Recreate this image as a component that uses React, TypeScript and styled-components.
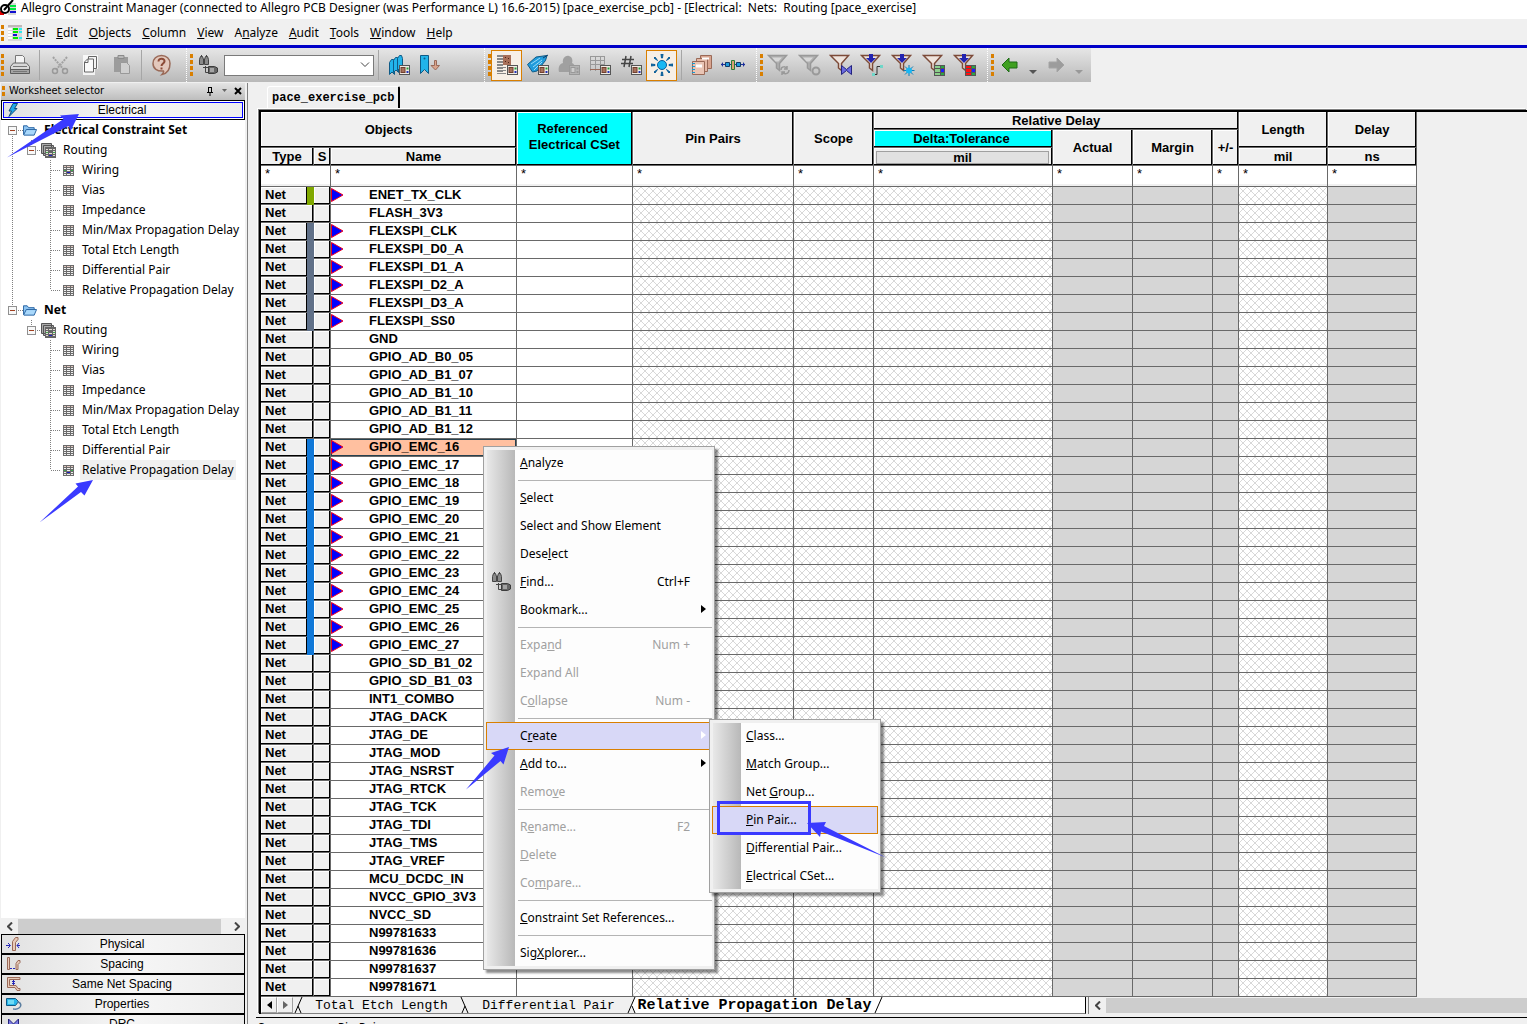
import React from "react";
import styled, { createGlobalStyle, css } from "styled-components";

const UI = `"Noto Sans", "Open Sans", sans-serif`;
const ARIAL = `"Liberation Sans", Arial, sans-serif`;
const MONO = `"Liberation Mono", "Courier New", monospace`;

const GlobalStyle = createGlobalStyle`
  *, *::before, *::after { box-sizing: border-box; }
  body { margin: 0; background: #f0f0f0; font-family: ${UI}; color: #000; }
  button, input, select { font: inherit; color: inherit; margin: 0; }
`;

const App_ = styled.div`
  position: relative;
  display: flex;
  flex-direction: column;
  height: 100vh;
  overflow: hidden;
  background: #f0f0f0;
`;

/* ---------- title and menu ---------- */

const TitleBar = styled.header`
  flex: none;
  display: flex;
  align-items: center;
  gap: 5px;
  height: 19px;
  padding-bottom: 3px;
  background: #fff;
  font: 12px/16px ${UI};
  white-space: pre;
`;

const MenuBar = styled.nav`
  flex: none;
  display: flex;
  align-items: center;
  height: 29px;
  border-bottom: 3px solid #0000c8;
  padding: 1px 0 0 1px;
  gap: 4px;
`;

const MenuList = styled.div`
  display: flex;
  gap: 11px;
`;

const MenuButton = styled.button`
  padding: 0;
  border: 0;
  background: none;
  font: 12px/18px ${UI};
`;

const Handle = styled.span<{ $dots?: number }>`
  flex: none;
  width: 3px;
  height: ${(p) => (p.$dots ?? 4) * 6 - 2}px;
  background: repeating-linear-gradient(#d97f00 0 4px, transparent 4px 6px);
`;

/* ---------- toolbar ---------- */

const Toolbar = styled.div`
  flex: none;
  display: flex;
  width: fit-content;
  height: 34px;
  margin-bottom: 1px;
  background: linear-gradient(#e6e6e6, #b9b9b9);
`;

const Group = styled.div<{ $w: number }>`
  display: flex;
  align-items: center;
  width: ${(p) => p.$w}px;
  padding-left: 3px;
  border-right: 1px dotted #fff;
  &:first-child { padding-left: 1px; }
  &:last-child { border-right: 0; }
`;

const ToolButton = styled.button<{ $on?: boolean; $w?: number }>`
  flex: none;
  display: flex;
  align-items: center;
  justify-content: center;
  width: ${(p) => p.$w ?? 31}px;
  height: 31px;
  padding: 0;
  border: 1px solid ${(p) => (p.$on ? "#d97f00" : "transparent")};
  background: ${(p) => (p.$on ? "#f7efe6" : "none")};
`;

const ToolDivider = styled.span`
  flex: none;
  width: 1px;
  height: 30px;
  margin: 0 4px;
  background: #a6a6a6;
`;

const SearchBox = styled.div`
  position: relative;
  width: 150px;
  height: 21px;
  svg { position: absolute; right: 4px; top: 6px; pointer-events: none; }
`;

const SearchSelect = styled.select`
  appearance: none;
  width: 100%;
  height: 100%;
  border: 1px solid #7a7a7a;
  border-radius: 0;
  background: #fff;
`;

/* ---------- body ---------- */

const Body = styled.div`
  flex: none;
  display: flex;
`;

const Sidebar = styled.aside`
  flex: none;
  display: flex;
  flex-direction: column;
  width: 248px;
  padding: 0 2px 0 1px;
  border-right: 1px solid #808080;
`;

const PanelHeader = styled.div`
  display: flex;
  align-items: center;
  height: 17px;
  padding: 0 3px 2px 1px;
  gap: 4px;
  background: linear-gradient(#e4e4e4, #bdbdbd);
  font: 11px/14px "DejaVu Sans Condensed", "DejaVu Sans", sans-serif;
`;

const PanelTools = styled.div`
  display: flex;
  align-items: center;
  gap: 6px;
  margin-left: auto;
`;

const PanelTool = styled.button`
  display: flex;
  padding: 0;
  border: 0;
  background: none;
`;

const SectionButton = styled.button<{ $active?: boolean }>`
  flex: none;
  display: grid;
  grid-template-columns: 20px 1fr 26px;
  align-items: center;
  width: 244px;
  height: 20px;
  padding: 0 0 0 4px;
  border: 1px solid #000;
  background: linear-gradient(90deg, #e2e2e2, #f6f6f6 55%, #ececec);
  font: 12px/16px ${ARIAL};
  ${(p) => p.$active && css`box-shadow: inset 0 0 0 1px #fff, inset 0 0 0 2px #0000ff;`}
`;

const Tree = styled.ul`
  flex: 1;
  margin: 0;
  padding: 0;
  list-style: none;
  background: #fff;
  overflow: hidden;
`;

const TreeRow = styled.li<{ $bold?: boolean; $selected?: boolean }>`
  display: flex;
  align-items: center;
  height: 20px;
  gap: 5px;
  font: ${(p) => (p.$bold ? 700 : 400)} 12px/20px ${UI};
  white-space: nowrap;
  span {
    padding: 0 2px;
    background: ${(p) => (p.$selected ? "#f0f0f0" : "none")};
  }
`;

const TreeLines = styled.svg`
  flex: none;
`;

const ScrollTrack = styled.div<{ $h: number }>`
  flex: none;
  display: flex;
  align-items: center;
  height: ${(p) => p.$h}px;
  background: #f0f0f0;
`;

const ScrollArrow = styled.button`
  flex: none;
  display: flex;
  align-items: center;
  justify-content: center;
  width: 17px;
  height: 100%;
  padding: 0;
  border: 0;
  background: none;
`;

const ScrollThumb = styled.span<{ $rest?: number }>`
  flex: 1;
  height: 15px;
  margin-right: ${(p) => p.$rest ?? 0}px;
  background: #cdcdcd;
`;

/* ---------- worksheet ---------- */

const Main = styled.main`
  flex: 1;
  min-width: 0;
  display: flex;
  flex-direction: column;
  padding-left: 11px;
`;

const DocTabs = styled.div`
  display: flex;
  height: 27px;
  padding: 3px 8px 2px;
`;

const DocTab = styled.button`
  padding: 0 4px;
  border: 0;
  border-top: 1px solid #fff;
  border-left: 1px solid #fff;
  border-right: 2px solid #000;
  border-radius: 3px 2px 0 0;
  background: #f0f0f0;
  font: 700 12px/20px ${MONO};
`;

const Frame = styled.div`
  border: solid #000;
  border-width: 2px 0 0 2px;
  box-shadow: -1px -1px 0 #808080, -2px -2px 0 #fff;
`;

const Sheet = styled.table`
  table-layout: fixed;
  width: 1156px;
  border-collapse: separate;
  border-spacing: 0;
  font: 700 13px/16px ${ARIAL};
`;

const Head = styled.th<{ $cyan?: boolean; $tall?: boolean }>`
  height: 18px;
  padding: ${(p) => (p.$tall ? "0 4px 4px 0" : p.$cyan ? "0 3px 0 0" : "0")};
  border: solid #696969;
  border-width: 0 1px 1px 0;
  background: ${(p) => (p.$cyan ? "#00ffff" : "#f0f0f0")};
  box-shadow: inset -1px -1px 0 #000, inset 1px 1px 0 #fff;
  font: 700 13px/16px ${ARIAL};
  white-space: pre;
`;

const UnitButton = styled.button`
  display: block;
  width: calc(100% - 5px);
  height: 13px;
  margin: 1px 0 0 2px;
  padding: 0;
  border: 1px solid #a0a0a0;
  background: #e1e1e1;
  font: 700 13px/11px ${ARIAL};
`;

const FilterCell = styled.td`
  height: 21px;
  padding: 0 0 2px;
  border: solid #696969;
  border-width: 0 1px 1px 0;
  background: linear-gradient(#fff 18px, #f0f0f0 18px);
`;

const FilterInput = styled.input`
  display: block;
  width: 100%;
  height: 18px;
  padding: 0 0 4px 4px;
  border: 0;
  background: none;
  font: 13px/14px ${ARIAL};
`;

type Kind = "white" | "hatch" | "grey";

const hatch = `url("data:image/svg+xml,%3Csvg xmlns='http://www.w3.org/2000/svg' width='8' height='8'%3E%3Cpath d='M-1-1L9 9M9-1L-1 9' stroke='%23d8d8d8'/%3E%3C/svg%3E")`;

const Cell = styled.td<{ $kind: Kind }>`
  height: 18px;
  padding: 0;
  border: solid #696969;
  border-width: 0 1px 1px 0;
  background: ${(p) => (p.$kind === "grey" ? "#d6d6d6" : p.$kind === "hatch" ? hatch + " #fff" : "#fff")};
`;

const NameCell = styled(Cell)<{ $selected?: boolean }>`
  ${(p) => p.$selected && css`background: #ffc0a0; box-shadow: inset 0 0 0 1px #26404d;`}
`;

const NameInner = styled.div`
  display: grid;
  grid-template-columns: 38px 1fr;
  align-items: center;
  height: 17px;
  padding-bottom: 1px;
  svg { display: block; }
`;

const TypeCell = styled.td<{ $bar?: string }>`
  height: 18px;
  padding: 0 0 1px 4px;
  border: solid #696969;
  border-width: 0 1px 1px 0;
  background: #f0f0f0;
  box-shadow: inset -1px -1px 0 #000, inset 1px 1px 0 #fff;
  ${(p) =>
    p.$bar &&
    css`
      border-image: linear-gradient(90deg, #696969 46px, ${p.$bar} 46px) 1;
      box-shadow: inset -6px 0 0 ${p.$bar}, inset -7px -1px 0 #000, inset 1px 1px 0 #fff;
    `}
`;

const SheetTabs = styled.div`
  display: flex;
  align-items: stretch;
  height: 17px;
`;

const SheetTabArea = styled.div`
  flex: none;
  display: flex;
  width: 825px;
  border-right: 1px solid #000;
  border-bottom: 1px solid #808080;
  background: #fff;
`;

const Nudge = styled.button`
  display: flex;
  align-items: center;
  justify-content: center;
  width: 16px;
  padding: 0;
  border: 1px solid #a0a0a0;
  border-left-color: #fff;
  border-top-color: #fff;
  background: #f0f0f0;
`;

const SheetTab = styled.button<{ $active?: boolean; $w: number }>`
  flex: none;
  width: ${(p) => p.$w}px;
  padding: 2px 0 0;
  border: 0;
  background: ${(p) => (p.$active ? "#fff" : "#f0f0f0")};
  font: ${(p) => (p.$active ? "700 15px" : "400 13px")} / 14px ${MONO};
  white-space: nowrap;
`;

const Slant = styled.svg`
  flex: none;
  display: block;
`;

const SheetScroll = styled.div`
  flex: 1;
  margin-left: 2px;
  border-left: 1px solid #808080;
`;

const StatusBar = styled.footer`
  display: flex;
  gap: 46px;
  height: 17px;
  margin: 3px 0 0 -3px;
  padding: 0 2px;
  border-top: 1px solid #000;
  font: 12px/20px ${UI};
`;

/* ---------- context menus ---------- */

const Popup = styled.div<{ $x: number; $y: number; $w: number }>`
  position: absolute;
  left: ${(p) => p.$x}px;
  top: ${(p) => p.$y}px;
  width: ${(p) => p.$w}px;
  padding: 2px;
  border: 1px solid #a0a0a0;
  box-shadow: 3px 3px 2px rgba(0, 0, 0, 0.45);
  background:
    linear-gradient(90deg, #e8e8e8, #b8b8b8) 3px 3px / 28px calc(100% - 6px) no-repeat,
    linear-gradient(#fdfdfd, #fdfdfd) 3px 3px / calc(100% - 5px) calc(100% - 6px) no-repeat,
    #f0f0f0;
`;

const PopupItem = styled.button<{ $hot?: boolean }>`
  display: grid;
  grid-template-columns: 33px 1fr auto 21px;
  align-items: center;
  width: 100%;
  height: 28px;
  padding: 0;
  border: 1px solid ${(p) => (p.$hot ? "#d97f00" : "transparent")};
  background: ${(p) => (p.$hot ? "#d8d8f7" : "none")};
  font: 12px/20px ${UI};
  text-align: left;
  white-space: nowrap;
  &:disabled { color: #a0a0a0; }
  svg { display: block; margin-left: 4px; }
  svg:last-child { margin-left: 11px; margin-bottom: 3px; }
`;

const PopupRule = styled.hr`
  height: 1px;
  margin: 3px 0 3px 32px;
  border: 0;
  background: #b4b4b4;
`;

const Overlay = styled.svg`
  position: absolute;
  left: 0;
  top: 0;
  pointer-events: none;
`;

/* ---------- icons ---------- */

const BR = "#9a6a58";

const Svg = ({ w = 22, h = 22, children }: { w?: number; h?: number; children: React.ReactNode }) => (
  <svg width={w} height={h} viewBox={`0 0 ${w} ${h}`} fill="none" aria-hidden="true">
    {children}
  </svg>
);

const Chip = ({ x = 11, y = 11, off = false }: { x?: number; y?: number; off?: boolean }) => (
  <g transform={`translate(${x} ${y})`}>
    <rect x="0.5" y="0.5" width="10" height="9" fill={off ? "#b4b4b4" : "#f2ebe4"} stroke={off ? "#999" : "#555"} />
    <rect x="2" y="2.5" width="4" height="5" fill={off ? "#ccc" : "#a8715c"} stroke={off ? "#999" : "#70402f"} />
    <rect x="7.5" y="2.5" width="2" height="2" fill={off ? "#999" : "#1f9c3a"} />
    <rect x="7.5" y="6" width="2" height="2" fill={off ? "#999" : "#2433b8"} />
  </g>
);

const Printer = () => (
  <Svg>
    <path d="M6.500 9.500V1.500h7l2 2v6" fill="#f4f4f4" stroke="#777" />
    <path d="M1.500 12.500l3-3.500h13l3 3.500v4h-19z" fill="#d8d8d8" stroke="#666" />
    <path d="M1.500 15.500h19v4h-19z" fill="#a4a4a4" stroke="#5c5c5c" />
    <path d="M4 12.500h14M4 17.500h14" stroke="#777" />
  </Svg>
);
const Scissors = () => (
  <Svg>
    <path d="M4 3l11 13M18 3L7 16" stroke="#a2a2a2" strokeWidth="2" strokeDasharray="2 1" />
    <circle cx="6" cy="17" r="2.5" stroke="#9a9a9a" strokeWidth="1.5" />
    <circle cx="16" cy="17" r="2.5" stroke="#9a9a9a" strokeWidth="1.5" />
  </Svg>
);
const CopyIcon = () => (
  <Svg>
    <path d="M3 1h15v14h-3v6H3z" fill="#fff" opacity=".8" />
    <path d="M8.500 2.500h8v12h-8z" fill="#f4f4f4" stroke="#666" />
    <path d="M4.500 8l3-3h6v13h-9z" fill="#fafafa" stroke="#666" />
    <path d="M8 5v3.500H4.500" stroke="#666" />
  </Svg>
);
const Paste = () => (
  <Svg>
    <path d="M3 3h14v15H3z" fill="#9c9c9c" />
    <path d="M7 1.500h6v3H7z" fill="#b8b8b8" stroke="#8a8a8a" />
    <path d="M9.500 8.500h6l3 3v8h-9z" fill="#cfcfcf" stroke="#999" />
  </Svg>
);
const HelpIcon = () => (
  <Svg>
    <path d="M10.500 1.500c5 0 8.500 3.500 8.500 8 0 6-3 10-8 11 1.500-1.500 2-2.500 1.500-3.500C6 17.500 2 14.500 2 9.500c0-4.500 3.500-8 8.500-8z" fill="#e3c8bc" stroke={BR} strokeWidth="1.500" />
    <path d="M7.500 7.500c0-4 6.500-3.500 6 0-.3 2-3 2-3 4.500" stroke="#8c4a36" strokeWidth="2" />
    <path d="M9.500 13.500h2v2h-2z" fill="#8c4a36" />
  </Svg>
);
const FindIcon = () => (
  <Svg>
    <path d="M1.500 10.500v-5l1-3h2l1 3v5zM6.500 10.500v-5l1-3h2l1 3v5z" fill="#8a8a8a" stroke="#444" />
    <path d="M3 1h1v2H3zM8 1h1v2H8zM5 5h2v3H5z" fill="#444" />
    <path d="M5 13.500h6M7.500 12v6.500H11" stroke="#444" />
    <path d="M10.500 12.500h6l3 1.500v4l-3 1.500h-6z" fill="#666" stroke="#3c3c3c" />
    <path d="M12 14h4v4h-4z" fill="#a4a4a4" />
  </Svg>
);
const Ribbon = ({ x, y }: { x: number; y: number }) => (
  <path transform={`translate(${x} ${y})`} d="M.5 3.500l2-3h2l1 3v12l-2.500-2.500-2.500 2.500z" fill="#22b4ea" stroke="#0f5a86" />
);
const Bookmarks = () => (
  <Svg>
    <Ribbon x={1} y={5} />
    <Ribbon x={5} y={3} />
    <Ribbon x={9} y={1} />
    <Chip />
  </Svg>
);
const BookmarkNext = () => (
  <Svg>
    <path d="M1.500 1.500h8v18l-4-4-4 4z" fill="#22b4ea" stroke="#0f5a86" />
    <circle cx="5.500" cy="4.500" r="1" fill="#0f5a86" />
    <path d="M15.500 6.500h2v5h3L16.500 16l-4.500-4.500h3.500z" fill="#d9a48c" stroke={BR} />
  </Svg>
);
const ListChip = () => (
  <Svg>
    <path d="M1 2h6M1 5h6M1 8h6M1 11h6M1 14h6M1 17h6" stroke="#888" strokeWidth="2" />
    <path d="M1 13h9v1H1zM1 16h9v1H1zM1 19h9v1H1z" fill="#888" />
    <path d="M7 1h8v10H7z" fill="#a86f58" />
    <path d="M9 3h1v1H9zM12 4h1v1h-1zM9 7h1v1H9zM12 8h1v1h-1z" fill="#4b261a" />
    <Chip />
  </Svg>
);
const TagChip = () => (
  <Svg>
    <path d="M.5 10.500L9 3l11-1.500-1.500 5L10 17l-4.500 1z" fill="#1f9bdc" stroke="#0f5a86" />
    <path d="M4 10l9-6M6 13l9-7M7 16l8-8" stroke="#9bdcf8" />
    <path d="M16 4l5-3" stroke="#0f3a66" />
    <Chip />
  </Svg>
);
const CloudChip = () => (
  <Svg>
    <path d="M5 9c-1-5 3-8 6-7s4 4 3 7c3 1 3 4 3 9H1c-1-4 0-8 4-9z" fill="#a0a0a0" />
    <Chip off />
  </Svg>
);
const GridChip = () => (
  <Svg>
    <path d="M1 2.500h15M1 6.500h15M1 10.500h15M1.500 2v15M6.500 2v15M11.500 2v9M15.500 2v9" stroke="#999" />
    <path d="M1 15.500h10" stroke={BR} />
    <Chip />
  </Svg>
);
const HashChip = () => (
  <Svg>
    <path d="M6 2L4 13M11 2L9 13M2 5.500h12M1 9.500h12" stroke="#444" strokeWidth="1.500" />
    <Chip />
  </Svg>
);
const Sun = () => (
  <Svg>
    <circle cx="11" cy="11" r="4.500" fill="#18b8f4" stroke="#0b5f9a" />
    <path d="M10 0h2l-.5 4h-1zM10.500 18h1l.5 4h-2zM0 10l4 .5v1L0 12zM18 10.500l4-.5v2l-4-.5zM3 4l1-1 2.500 3.500zM18 3l1 1-3.500 2.500zM3 18l3.500-2.500L4 19zM19 18l-1 1-2.500-3.500z" fill="#0b5f9a" stroke="#0b5f9a" />
  </Svg>
);
const Books = () => (
  <Svg>
    <path d="M9.500 1.500h11v13h-11z" fill="#d9a590" stroke={BR} />
    <path d="M5.500 4.500h11v13h-11z" fill="#e3b8a6" stroke={BR} />
    <path d="M11 3.500h7v2h-7z" fill="#fff" />
    <path d="M1.500 7.500h12v13h-12z" fill="#e9c5b5" stroke={BR} />
    <path d="M5 10.500h6v3H5z" fill="#fff" />
    <path d="M1 9.500h3M1 12.500h3M1 15.500h3M1 18.500h3" stroke="#1a9ad0" />
  </Svg>
);
const Satellite = () => (
  <Svg w={24}>
    <path d="M0 10.500h24" stroke="#1c2f9c" />
    <path d="M2 8l-2 2.500L2 13zM22 8l2 2.500L22 13z" fill="#1c2f9c" />
    <path d="M4.500 8.500h4v4h-4zM15.500 8.500h4v4h-4z" fill="#1f9bdc" stroke="#123a66" />
    <path d="M10.500 6.500h3v9h-3z" fill="#d9a073" stroke="#2c7a35" />
  </Svg>
);

const Funnel = ({ off, filled, children }: { off?: boolean; filled?: boolean; children?: React.ReactNode }) => (
  <Svg w={24} h={24}>
    <path d="M1.500 2.500h18l-7 8v7l-3-2.500v-4.500z" fill={off ? "#b0b0b0" : "#efe4dd"} stroke={off ? "#999" : "#7c4a38"} strokeWidth="1.500" />
    <path d="M5 4.500h10l-3.500 4h-3z" fill={off ? "#d8d8d8" : "none"} />
    {filled && <path d="M6 5h10l-5 5z" fill="#2323b0" />}
    {filled && <path d="M9 1h4v4H9z" fill="#2323b0" />}
    {children}
  </Svg>
);

const GreyCycle = () => (
  <Funnel off><path d="M14 17c0-4 5-4 6-1M22 17c0 4-5 5-7 2M20 13v3h-3M15 22v-3h3" stroke="#999" strokeWidth="1.500" /></Funnel>
);
const GreyStop = () => (
  <Funnel off><circle cx="18" cy="18" r="3.500" stroke="#999" strokeWidth="2" /></Funnel>
);
const FunnelBow = () => (
  <Funnel><path d="M12.500 12.500l5 4 5-4v9l-5-4-5 4z" fill="#6a6ae0" stroke="#23237f" /></Funnel>
);
const FunnelNote = () => (
  <Funnel filled><path d="M14 21.500h3v-8h4" stroke="#333" /><path d="M20 12h3v3h-3zM12 20h3v3h-3z" fill="#6fd6c8" /></Funnel>
);
const FunnelSun = () => (
  <Funnel filled>
    <path d="M18 12v11M12.500 17.500h11M14 13.500l8 8M22 13.500l-8 8" stroke="#0b7fb8" />
    <circle cx="18" cy="17.500" r="3" fill="#18b8f4" />
  </Funnel>
);
const Rack = ({ left }: { left: string }) => (
  <>
    <path d="M12 12h11v11H12z" fill="#555" />
    <path d="M13 13h5v2h-5zM13 16h5v3h-5zM13 20h5v2h-5z" fill={left} />
    <path d="M19 13h3v2h-3zM19 20h3v2h-3z" fill="#2ca644" />
    <path d="M19 16h3v3h-3z" fill="#1d1dff" />
  </>
);
const FunnelGreen = () => <Funnel><Rack left="#8ccf8c" /></Funnel>;
const FunnelRed = () => <Funnel filled><Rack left="#ff1010" /></Funnel>;

const Arrow = ({ left = false, fill, line }: { left?: boolean; fill: string; line: string }) => (
  <Svg w={18} h={18}>
    <path d={left ? "M1 9l7-7v4h8v6H8v4z" : "M17 9l-7-7v4H2v6h8v4z"} fill={fill} stroke={line} />
  </Svg>
);
const Caret = ({ c }: { c: string }) => (
  <svg width="8" height="20" aria-hidden="true"><path d="M0 15h8l-4 4z" fill={c} /></svg>
);
const Chevron = ({ right = false }: { right?: boolean }) => (
  <svg width="6" height="9" aria-hidden="true">
    <path d={right ? "M1 0.500l4 4-4 4" : "M5 0.500l-4 4 4 4"} fill="none" stroke="#444" strokeWidth="2" />
  </svg>
);

const Bolt = () => (
  <svg width="14" height="16" aria-hidden="true">
    <path d="M7 1.500h4.500L8.500 6.500H11L3 14.500 5.500 9H3z" fill="#22a8e8" stroke="#134b78" />
  </svg>
);
const PhysicalIcon = () => (
  <svg width="15" height="16" aria-hidden="true" fill="none">
    <path d="M12 1.500H9.500l-3 4v9h3v-8l2.500-3z" fill="#e8cbb9" stroke={BR} />
    <path d="M0 9.500h4M14 9.500h-3M2 7l2.500 2.500L2 12M13 7l-2 2.500 2 2.500" stroke="#2828b8" />
  </svg>
);
const SpacingIcon = () => (
  <svg width="15" height="16" aria-hidden="true" fill="none">
    <path d="M1.500 1.500h2v12h-2zM14 4.500h-2l-2 3v6h2v-5l2-2z" fill="#e8cbb9" stroke={BR} />
    <path d="M4 12.500h6" stroke="#2828b8" strokeDasharray="2 1" />
  </svg>
);
const SameNetIcon = () => (
  <svg width="15" height="16" aria-hidden="true" fill="none">
    <path d="M14 1.500H1.500v10H9l2 3h3v-2h-2l-2-3H3.500v-6H14z" fill="#e8cbb9" stroke={BR} />
    <path d="M7.500 4v5M6 5.500h3M6 7.500h3" stroke="#2828b8" />
  </svg>
);
const PropsIcon = () => (
  <svg width="16" height="16" aria-hidden="true" fill="none">
    <path d="M.5 2.500h9l3 3-3 4h-9z" fill="#27b6ea" stroke="#0f5a86" />
    <path d="M2 5h6M2 7h6" stroke="#bff" />
    <path d="M11 6c4 0 5 4 2 6s-4 1-6 1" stroke="#5b7ea0" strokeWidth="1.500" />
  </svg>
);
const DrcIcon = () => (
  <svg width="15" height="16" aria-hidden="true">
    <path d="M2.500 3v11l5-5 5 5V3l-5 5z" fill="#7a7ae0" stroke="#23237f" />
  </svg>
);

const FolderIcon = () => (
  <svg width="14" height="12" viewBox="0 0 15 12" aria-hidden="true">
    <path d="M.5 11V1.500h4l1.500 2h6V6" fill="#8dc4f2" stroke="#245f9e" />
    <path d="M.8 11L3.500 5.500h11L12 11.500H1z" fill="#a9d8fb" stroke="#245f9e" />
  </svg>
);
const StackIcon = () => (
  <svg width="15" height="15" aria-hidden="true">
    <path d="M.5.500h10v10H.5zM2.500 2.500h10v10h-10z" fill="#aaa" stroke="#555" />
    <path d="M4 4h11v11H4z" fill="#666" />
    <path d="M5 6h2v1H5zM8 6h3v1H8zM12 6h2v1h-2zM5 8h2v1H5zM12 8h2v1h-2zM5 10h2v1H5zM8 10h3v1H8zM12 10h2v1h-2zM5 12h2v1H5zM12 12h2v1h-2z" fill="#e4dcd6" />
    <path d="M5 9h2v1H5zM12 9h2v1h-2z" fill="#3fae4f" />
    <path d="M8 12h3v1H8z" fill="#2222c0" />
  </svg>
);
const SheetIcon = ({ marked }: { marked?: boolean }) => (
  <svg width="12" height="11" aria-hidden="true">
    <path d="M0 0h11v11H0z" fill="#6c6c6c" />
    <path d="M1 1h2v1H1zM4 1h3v1H4zM8 1h2v1H8z" fill="#e3c8c0" />
    <path d="M1 3h2v1H1zM4 3h3v1H4zM8 3h2v1H8zM1 5h2v1H1zM4 5h3v1H4zM8 5h2v1H8zM1 7h2v1H1zM4 7h3v1H4zM8 7h2v1H8zM1 9h2v1H1zM4 9h3v1H4zM8 9h2v1H8z" fill="#f0f0f0" />
    {marked && <path d="M1 5h2v1H1zM8 5h2v1H8z" fill="#3fae4f" />}
    {marked && <path d="M4 7h3v1H4z" fill="#2222c0" />}
  </svg>
);
const FlagIcon = () => (
  <svg width="13" height="14" aria-hidden="true">
    <path d="M.5.500L12 7 .5 13.500z" fill="#0000ff" stroke="#f00020" />
  </svg>
);
const SubArrow = ({ c }: { c: string }) => (
  <svg width="5" height="8" aria-hidden="true"><path d="M0 0l5 4-5 4z" fill={c} /></svg>
);
const GridLogo = () => (
  <svg width="14" height="16" aria-hidden="true">
    <path d="M0 0h14v16H0z" fill="#d8d8d8" />
    <path d="M0 0h14v2H0z" fill="#c0b8b8" />
    <path d="M0 3h4v2H0zM0 6h4v2H0zM0 9h4v2H0zM0 12h4v2H0z" fill="#fff" />
    <path d="M5 3h5v2H5zM5 6h5v2H5zM5 12h5v2H5z" fill="#00e800" />
    <path d="M5 9h4v2H5z" fill="#1010d0" />
    <path d="M11 3h3v2h-3zM11 6h3v2h-3zM11 12h3v2h-3z" fill="#30e8f0" />
  </svg>
);
const TitleLogo = () => (
  <svg width="16" height="16" aria-hidden="true">
    <path d="M8 3h8v12H8z" fill="#d8d8d8" />
    <path d="M10 5h6v2h-6zM10 8h6v2h-6z" fill="#00e840" />
    <path d="M10 11h6v2h-6z" fill="#1010d0" />
    <path d="M0 11h4v4H0z" fill="#e00000" />
    <circle cx="5" cy="9" r="4" fill="#fff" stroke="#000" strokeWidth="2" />
    <path d="M4 10L13 0" stroke="#000" strokeWidth="2" />
  </svg>
);

/* ---------- data ---------- */

/* "_" marks the access key that follows it */
const Label = ({ t }: { t: string }) => {
  const i = t.indexOf("_");
  if (i < 0) return <span>{t}</span>;
  return (
    <span>
      {t.slice(0, i)}
      <u>{t[i + 1]}</u>
      {t.slice(i + 2)}
    </span>
  );
};

const menus = ["_File", "_Edit", "_Objects", "_Column", "_View", "A_nalyze", "_Audit", "_Tools", "_Window", "_Help"];

const GREEN = "#80a800";
const SLATE = "#607088";
const BLUE = "#1078d8";

const nets: [string, string?][] = [
  ["ENET_TX_CLK", GREEN], ["FLASH_3V3"], ["FLEXSPI_CLK", SLATE], ["FLEXSPI_D0_A", SLATE],
  ["FLEXSPI_D1_A", SLATE], ["FLEXSPI_D2_A", SLATE], ["FLEXSPI_D3_A", SLATE], ["FLEXSPI_SS0", SLATE],
  ["GND"], ["GPIO_AD_B0_05"], ["GPIO_AD_B1_07"], ["GPIO_AD_B1_10"], ["GPIO_AD_B1_11"], ["GPIO_AD_B1_12"],
  ["GPIO_EMC_16", BLUE], ["GPIO_EMC_17", BLUE], ["GPIO_EMC_18", BLUE], ["GPIO_EMC_19", BLUE],
  ["GPIO_EMC_20", BLUE], ["GPIO_EMC_21", BLUE], ["GPIO_EMC_22", BLUE], ["GPIO_EMC_23", BLUE],
  ["GPIO_EMC_24", BLUE], ["GPIO_EMC_25", BLUE], ["GPIO_EMC_26", BLUE], ["GPIO_EMC_27", BLUE],
  ["GPIO_SD_B1_02"], ["GPIO_SD_B1_03"], ["INT1_COMBO"], ["JTAG_DACK"], ["JTAG_DE"], ["JTAG_MOD"],
  ["JTAG_NSRST"], ["JTAG_RTCK"], ["JTAG_TCK"], ["JTAG_TDI"], ["JTAG_TMS"], ["JTAG_VREF"],
  ["MCU_DCDC_IN"], ["NVCC_GPIO_3V3"], ["NVCC_SD"], ["N99781633"], ["N99781636"], ["N99781637"], ["N99781671"],
];

const colWidths = [53, 17, 186, 116, 161, 80, 179, 80, 80, 26, 89, 89];
const dataKinds: Kind[] = ["white", "hatch", "hatch", "hatch", "grey", "grey", "grey", "hatch", "grey"];
const filterNames = ["Name", "Referenced CSet", "Pin Pairs", "Scope", "Delta", "Actual", "Margin", "Sign", "Length", "Delay"];

const sheets = ["Wiring", "Vias", "Impedance", "Min/Max Propagation Delay", "Total Etch Length", "Differential Pair", "Relative Propagation Delay"];

type Entry = { t: string; key?: string; off?: boolean; sub?: boolean; hot?: boolean; icon?: boolean } | null;

const mainMenu: Entry[] = [
  { t: "_Analyze" }, null,
  { t: "_Select" }, { t: "Select and Show Element" }, { t: "Dese_lect" },
  { t: "_Find...", key: "Ctrl+F", icon: true }, { t: "Bookmark...", sub: true }, null,
  { t: "Expa_nd", key: "Num +", off: true }, { t: "Expand All", off: true }, { t: "C_ollapse", key: "Num -", off: true }, null,
  { t: "C_reate", sub: true, hot: true }, { t: "_Add to...", sub: true }, { t: "Remo_ve", off: true }, null,
  { t: "R_ename...", key: "F2", off: true }, { t: "_Delete", off: true }, { t: "Co_mpare...", off: true }, null,
  { t: "_Constraint Set References..." }, null,
  { t: "Sig_Xplorer..." },
];

const createMenu: Entry[] = [
  { t: "_Class..." }, { t: "_Match Group..." }, { t: "Net _Group..." },
  { t: "_Pin Pair...", hot: true }, { t: "_Differential Pair..." }, { t: "_Electrical CSet..." },
];

/* ---------- parts ---------- */

const Lines = ({ w, d, box }: { w: number; d: string; box?: number }) => (
  <TreeLines width={w} height="20" overflow="visible" aria-hidden="true">
    <path d={d} stroke="#808080" strokeDasharray="1 1" fill="none" />
    {box !== undefined && (
      <>
        <rect x={box + 0.5} y="6.500" width="8" height="8" fill="#f8f8f8" stroke="#909090" />
        <path d={`M${box + 2} 10.500h5`} stroke="#a04020" />
      </>
    )}
  </TreeLines>
);

const Branch = ({ title, last, marked }: { title: string; last?: boolean; marked: number }) => {
  const trunk = last ? "" : "M11.500 0v20";
  return (
    <>
      <TreeRow $bold>
        <Lines w={17} box={7} d={(last ? "M11.500 0v6" : "M11.500 16v4") + "M17 10.500h5"} />
        <FolderIcon />
        <span>{title}</span>
      </TreeRow>
      <TreeRow>
        <Lines w={35} box={26} d={trunk + "M30.500 0v6M36 10.500h4"} />
        <StackIcon />
        <span>Routing</span>
      </TreeRow>
      {sheets.map((s, i) => (
        <TreeRow key={s} $selected={last && i === sheets.length - 1}>
          <Lines w={57} d={trunk + (i === sheets.length - 1 ? "M49.500 0v10" : "M49.500 0v20") + "M50 10.500h10"} />
          <SheetIcon marked={i === marked} />
          <span>{s}</span>
        </TreeRow>
      ))}
    </>
  );
};

const Menu = ({ items }: { items: Entry[] }) => (
  <>
    {items.map((m, i) =>
      m === null ? (
        <PopupRule key={i} />
      ) : (
        <PopupItem key={i} $hot={m.hot} disabled={m.off}>
          {m.icon ? <FindIcon /> : <i />}
          <Label t={m.t} />
          <span>{m.key}</span>
          {m.sub ? <SubArrow c={m.hot ? "#fff" : "#000"} /> : <i />}
        </PopupItem>
      )
    )}
  </>
);

const Tool = ({ name, icon, on, w }: { name: string; icon: React.ReactNode; on?: boolean; w?: number }) => (
  <ToolButton aria-label={name} $on={on} $w={w}>{icon}</ToolButton>
);

export default function App() {
  return (
    <App_>
      <GlobalStyle />
      <TitleBar>
        <TitleLogo />
        <span>{"Allegro Constraint Manager (connected to Allegro PCB Designer (was Performance L) 16.6-2015) [pace_exercise_pcb] - [Electrical:  Nets:  Routing [pace_exercise]"}</span>
      </TitleBar>
      <MenuBar>
        <Handle $dots={3} />
        <GridLogo />
        <MenuList>
          {menus.map((m) => <MenuButton key={m}><Label t={m} /></MenuButton>)}
        </MenuList>
      </MenuBar>

      <Toolbar>
        <Group $w={187}>
          <Handle />
          <Tool name="Print" icon={<Printer />} />
          <ToolDivider />
          <Tool name="Cut" icon={<Scissors />} />
          <Tool name="Copy" icon={<CopyIcon />} />
          <Tool name="Paste" icon={<Paste />} />
          <ToolDivider />
          <Tool name="Help" icon={<HelpIcon />} />
        </Group>
        <Group $w={298}>
          <Handle />
          <Tool name="Find" icon={<FindIcon />} />
          <SearchBox>
            <SearchSelect aria-label="Find text"><option></option></SearchSelect>
            <svg width="10" height="8" aria-hidden="true"><path d="M1 1.500l4 4 4-4" fill="none" stroke="#444" /></svg>
          </SearchBox>
          <ToolDivider />
          <Tool name="Bookmarks" icon={<Bookmarks />} />
          <Tool name="Next bookmark" icon={<BookmarkNext />} />
        </Group>
        <Group $w={272}>
          <Handle />
          <Tool name="Select list" icon={<ListChip />} on />
          <Tool name="Tag" icon={<TagChip />} />
          <Tool name="Cloud" icon={<CloudChip />} />
          <Tool name="Grid" icon={<GridChip />} />
          <Tool name="Number" icon={<HashChip />} />
          <Tool name="Highlight" icon={<Sun />} on />
          <ToolDivider />
          <Tool name="Reports" icon={<Books />} />
          <Tool name="Topology" icon={<Satellite />} />
        </Group>
        <Group $w={231}>
          <Handle />
          <Tool name="Refresh filter" icon={<GreyCycle />} />
          <Tool name="Stop filter" icon={<GreyStop />} />
          <Tool name="Filter DRC" icon={<FunnelBow />} />
          <Tool name="Filter signal" icon={<FunnelNote />} />
          <Tool name="Filter highlight" icon={<FunnelSun />} />
          <Tool name="Filter rows" icon={<FunnelGreen />} />
          <Tool name="Filter failures" icon={<FunnelRed />} />
        </Group>
        <Group $w={103}>
          <Handle />
          <Tool name="Back" icon={<Arrow left fill="#3fa020" line="#1d6a14" />} />
          <Tool name="Back history" icon={<Caret c="#555" />} w={15} />
          <Tool name="Forward" icon={<Arrow fill="#9c9c9c" line="#a4a4a4" />} />
          <Tool name="Forward history" icon={<Caret c="#999" />} w={15} />
        </Group>
      </Toolbar>

      <Body>
        <Sidebar>
          <PanelHeader>
            <Handle $dots={2} />
            <span>Worksheet selector</span>
            <PanelTools>
              <PanelTool aria-label="Pin"><svg width="8" height="10"><path d="M2 1.500h4M2.500 1v5M5.500 1v5M1 6.500h6M4 6v4" stroke="#000" /></svg></PanelTool>
              <PanelTool aria-label="Options"><svg width="8" height="8"><path d="M2 2h5L4.500 5z" fill="#666" /></svg></PanelTool>
              <PanelTool aria-label="Close"><svg width="8" height="8"><path d="M1 1l6 6M7 1L1 7" stroke="#000" strokeWidth="2" /></svg></PanelTool>
            </PanelTools>
          </PanelHeader>
          <SectionButton $active><Bolt /><span>Electrical</span></SectionButton>
          <Tree>
            <Branch title="Electrical Constraint Set" marked={0} />
            <Branch title="Net" marked={6} last />
          </Tree>
          <ScrollTrack $h={16}>
            <ScrollArrow aria-label="Scroll left"><Chevron /></ScrollArrow>
            <ScrollThumb $rest={7} />
            <ScrollArrow aria-label="Scroll right"><Chevron right /></ScrollArrow>
          </ScrollTrack>
          <SectionButton><PhysicalIcon /><span>Physical</span></SectionButton>
          <SectionButton><SpacingIcon /><span>Spacing</span></SectionButton>
          <SectionButton><SameNetIcon /><span>Same Net Spacing</span></SectionButton>
          <SectionButton><PropsIcon /><span>Properties</span></SectionButton>
          <SectionButton><DrcIcon /><span>DRC</span></SectionButton>
        </Sidebar>

        <Main>
          <DocTabs><DocTab>pace_exercise_pcb</DocTab></DocTabs>
          <Frame>
            <Sheet>
              <colgroup>{colWidths.map((w, i) => <col key={i} width={w} />)}</colgroup>
              <thead>
                <tr>
                  <Head colSpan={3} rowSpan={2}>Objects</Head>
                  <Head rowSpan={3} $cyan $tall>{"Referenced\n Electrical CSet"}</Head>
                  <Head rowSpan={3}>Pin Pairs</Head>
                  <Head rowSpan={3}>Scope</Head>
                  <Head colSpan={4}>Relative Delay</Head>
                  <Head rowSpan={2}>Length</Head>
                  <Head rowSpan={2}>Delay</Head>
                </tr>
                <tr>
                  <Head $cyan>Delta:Tolerance</Head>
                  <Head rowSpan={2}>Actual</Head>
                  <Head rowSpan={2}>Margin</Head>
                  <Head rowSpan={2}>+/-</Head>
                </tr>
                <tr>
                  <Head>Type</Head>
                  <Head>S</Head>
                  <Head>Name</Head>
                  <Head><UnitButton>mil</UnitButton></Head>
                  <Head>mil</Head>
                  <Head>ns</Head>
                </tr>
              </thead>
              <tbody>
                <tr>
                  <FilterCell colSpan={2}><FilterInput aria-label="Filter Type" defaultValue="*" /></FilterCell>
                  {filterNames.map((n) => (
                    <FilterCell key={n}><FilterInput aria-label={`Filter ${n}`} defaultValue="*" /></FilterCell>
                  ))}
                </tr>
                {nets.map(([name, bar]) => (
                  <tr key={name}>
                    <TypeCell $bar={bar}>Net</TypeCell>
                    <TypeCell />
                    <NameCell $kind="white" $selected={name === "GPIO_EMC_16"}>
                      <NameInner>{bar ? <FlagIcon /> : <i />}<span>{name}</span></NameInner>
                    </NameCell>
                    {dataKinds.map((k, i) => <Cell key={i} $kind={k} />)}
                  </tr>
                ))}
              </tbody>
            </Sheet>
            <SheetTabs>
              <SheetTabArea>
                <Nudge aria-label="Previous sheet"><svg width="5" height="8"><path d="M5 0L0 4l5 4z" /></svg></Nudge>
                <Nudge aria-label="Next sheet"><svg width="5" height="8"><path d="M0 0l5 4-5 4z" fill="#666" /></svg></Nudge>
                <Slant width="10" height="16"><path d="M0 0h10v16H0z" fill="#f0f0f0" /><path d="M2 16L9 0M5 9l3 7" stroke="#000" fill="none" /></Slant>
                <SheetTab $w={157}>Total Etch Length</SheetTab>
                <Slant width="10" height="16"><path d="M0 0h10v16H0z" fill="#f0f0f0" /><path d="M1 0l7 16M2 16l3-7" stroke="#000" fill="none" /></Slant>
                <SheetTab $w={157}>Differential Pair</SheetTab>
                <Slant width="9" height="16"><path d="M0 0h8L5 9l3 7H0z" fill="#f0f0f0" /><path d="M1 16L8 0M5 9l3 7" stroke="#000" fill="none" /></Slant>
                <SheetTab $active $w={237}>Relative Propagation Delay</SheetTab>
                <Slant width="10" height="16"><path d="M2 16L9 0" stroke="#000" fill="none" /></Slant>
              </SheetTabArea>
              <SheetScroll>
                <ScrollTrack $h={17}>
                  <ScrollArrow aria-label="Scroll sheet left"><Chevron /></ScrollArrow>
                  <ScrollThumb />
                </ScrollTrack>
              </SheetScroll>
            </SheetTabs>
          </Frame>
          <StatusBar><span>Scope</span><span>Pin Pair</span></StatusBar>
        </Main>
      </Body>

      <Popup $x={483} $y={446} $w={232}><Menu items={mainMenu} /></Popup>
      <Popup $x={709} $y={719} $w={172}><Menu items={createMenu} /></Popup>

      <Overlay width="900" height="880" aria-hidden="true">
        <g fill="#3a3aff">
          <path d="M79 114L60 115.500l3.500 3.500L7 157.500 68.500 126l2 5z" />
          <path d="M93 480l-17.500 3.500 2.500 3-38.500 36 41.500-30.500 3.500 3.500z" />
          <path d="M509 747l-18 6 3.500 2.500-28.500 34 34.500-28.500 3 3.500z" />
          <path d="M807 823l19-1-2 4 62 31.500-65-26-1 5.500z" />
        </g>
        <rect x="718.500" y="802.500" width="91" height="31" fill="none" stroke="#3a3aff" strokeWidth="3" />
      </Overlay>
    </App_>
  );
}
